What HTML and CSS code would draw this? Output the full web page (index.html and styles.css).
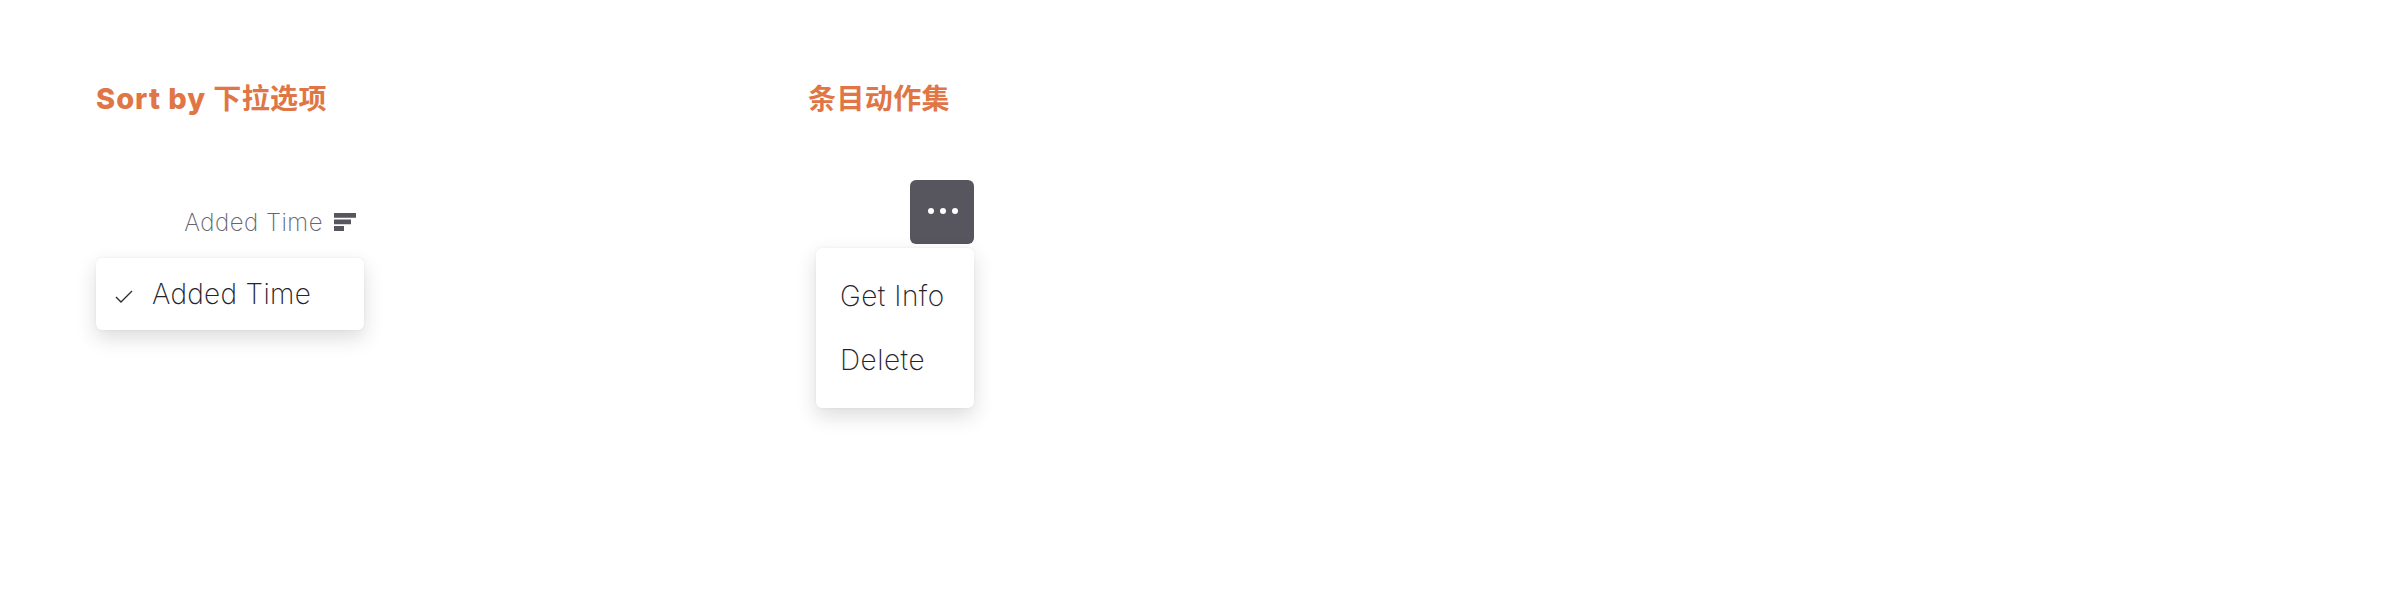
FILE: index.html
```html
<!DOCTYPE html>
<html lang="zh">
<head>
<meta charset="utf-8">
<title>Sort by</title>
<link rel="stylesheet" href="styles.css">
</head>
<body>
<main class="page">
  <section class="col col-sort">
    <h2 class="title"><span class="title-latin">Sort by</span> 下拉选项</h2>
    <div class="sort-row">
      <span class="sort-label">Added Time</span>
      <svg class="sort-icon" width="22" height="18" viewBox="0 0 22 18"><path fill="#57565f" d="M0 0h22v4.7H0zM0 6.6h17v4.7H0zM0 13h10v5H0z"/></svg>
    </div>
    <div class="menu menu-sort">
      <div class="sort-item">
        <svg class="check" width="18" height="14" viewBox="0 0 18 14"><path fill="none" stroke="#2f2e36" stroke-width="1.4" d="M1 8l5 5L17 2"/></svg>
        <span>Added Time</span>
      </div>
    </div>
  </section>
  <section class="col col-actions">
    <h2 class="title">条目动作集</h2>
    <div class="action-wrap">
      <button class="more" type="button"><i></i><i></i><i></i></button>
      <div class="menu menu-actions">
        <div class="action-item">Get Info</div>
        <div class="action-item">Delete</div>
      </div>
    </div>
  </section>
</main>
</body>
</html>
```
FILE: styles.css
```css
* { box-sizing: border-box; }
html, body { margin: 0; background: #fff; }
body { width: 2400px; height: 610px; overflow: hidden; font-family: Inter, "Noto Sans CJK SC", sans-serif; }
.page { display: flex; padding-top: 80px; padding-left: 96px; }
.col { display: flex; flex-direction: column; }
.col-sort { width: 268px; margin-right: 444px; }
.col-actions { width: 166px; }
.title { margin: 0; font-size: 28px; line-height: 36px; font-weight: 700; letter-spacing: 0.4px; color: #e07645; white-space: nowrap; padding-top: 1px; height: 36px; }
.title-latin { font-size: 29px; font-weight: 800; letter-spacing: 1px; }
.sort-row { display: flex; align-items: center; justify-content: flex-end; height: 32px; margin-top: 90px; padding-right: 8px; }
.sort-label { font-size: 24px; font-weight: 250; letter-spacing: 0.5px; color: #65646f; }
.sort-icon { margin-left: 11px; }
.menu { background: #fff; border-radius: 6px; box-shadow: 0 8px 20px rgba(40, 40, 50, 0.16), 0 0 3px rgba(40, 40, 50, 0.06); }
.menu-sort { height: 72px; margin-top: 20px; display: flex; align-items: center; }
.sort-item { display: flex; align-items: center; padding-left: 19px; font-size: 28px; font-weight: 250; letter-spacing: 0.3px; color: #25242c; }
.check { margin-right: 19px; margin-top: 4px; }
.action-wrap { display: flex; flex-direction: column; align-items: flex-end; margin-top: 64px; }
.more { display: flex; align-items: center; justify-content: center; gap: 6px; width: 64px; height: 64px; padding: 0 0 2px 2px; border: 0; border-radius: 6px; background: #57565f; }
.more i { width: 6px; height: 6px; border-radius: 50%; background: #fff; }
.menu-actions { width: 158px; height: 160px; margin-top: 4px; padding: 16px 0 0 24px; }
.action-item { height: 64px; line-height: 64px; font-size: 28px; font-weight: 250; letter-spacing: 0.5px; color: #25242c; white-space: nowrap; }
```
